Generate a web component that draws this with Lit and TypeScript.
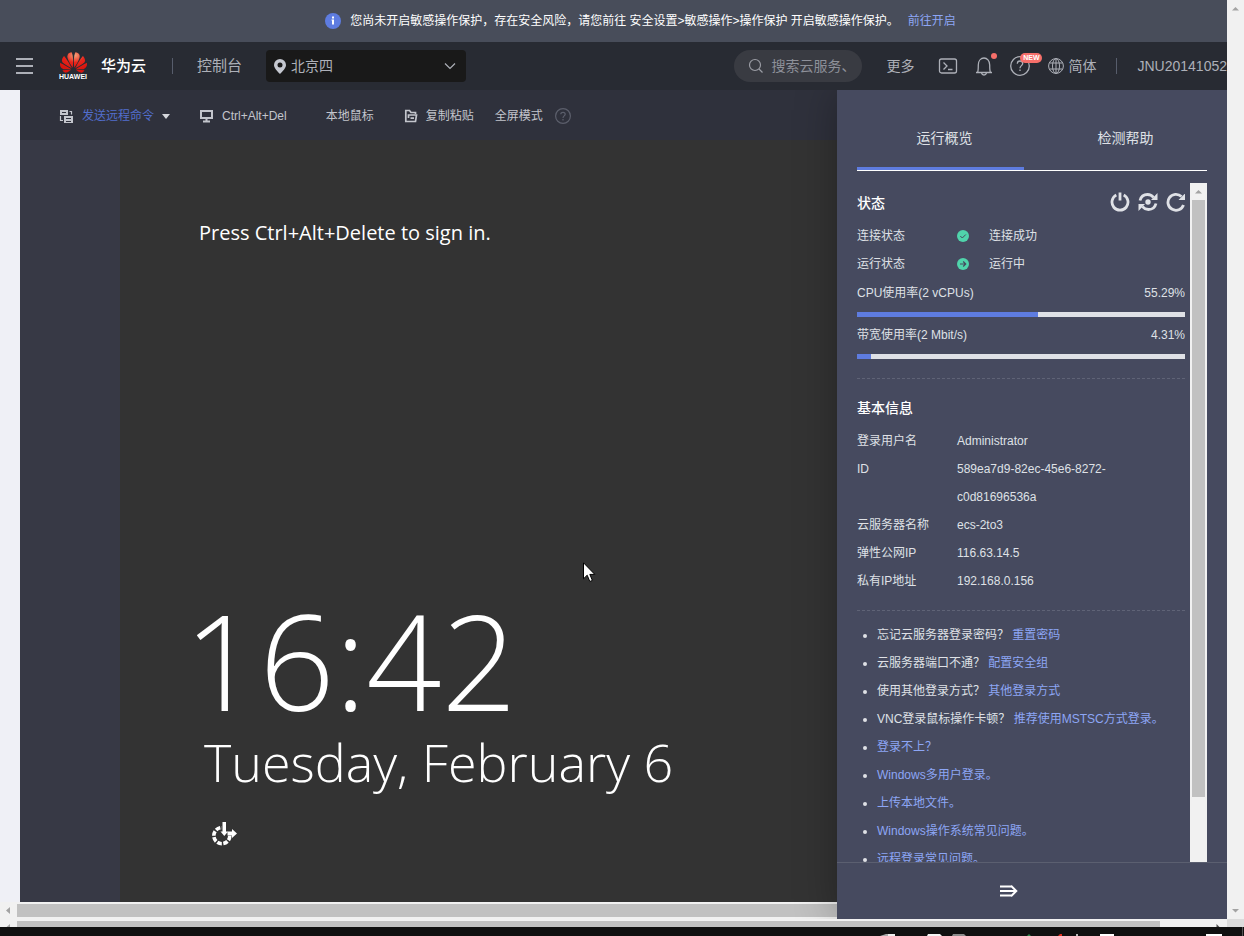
import { LitElement, html, css, svg } from "lit";
import { customElement, property, state } from "lit/decorators.js";
import { classMap } from "lit/directives/class-map.js";

const shared = css`
  * { box-sizing: border-box; }
  button, input, select { font: inherit; color: inherit; background: none; border: 0; padding: 0; margin: 0; outline: 0; }
  button { cursor: pointer; }
  a { color: inherit; text-decoration: none; }
  svg { display: block; flex: none; }
  h2, p, ul, dl, dd { margin: 0; padding: 0; }
`;

@customElement("scroll-track")
class ScrollTrack extends LitElement {
  @property({ type: Boolean, reflect: true }) horizontal = false;
  @property({ type: Number }) thumb = 0;
  @property({ type: Boolean }) end = false;

  static styles = [shared, css`
    :host { display: flex; flex-direction: column; width: 17px; background: #f1f1f1; overflow: hidden; flex: none; }
    :host([horizontal]) { flex-direction: row; width: auto; height: 17px; }
    .cap { flex: none; width: 17px; height: 17px; display: grid; place-items: center; }
    .lane { flex: 1; min-height: 0; min-width: 0; padding: 0 2px; }
    :host([horizontal]) .lane { padding: 2px 0; }
    .thumb { background: #c1c1c1; width: 100%; height: 100%; }
  `];

  render() {
    const size = this.horizontal ? `width:${this.thumb}%` : `height:${this.thumb}%`;
    const first = this.horizontal ? "M2 4.500 6 1v7z" : "M1 6.500h7L4.500 3z";
    const last = this.horizontal ? "M6 4.500 2.500 1v7z" : "M1 3h7L4.500 6.500z";
    return html`
      <span class="cap"><svg width="9" height="9" viewBox="0 0 9 9" fill="#a3a3a3"><path d=${first}/></svg></span>
      <div class="lane">${this.thumb ? html`<div class="thumb" style=${size}></div>` : ""}</div>
      ${this.end ? html`<span class="cap"><svg width="9" height="9" viewBox="0 0 9 9" fill=${this.horizontal ? "#505050" : "#a3a3a3"}><path d=${last}/></svg></span>` : ""}
    `;
  }
}

@customElement("notice-bar")
class NoticeBar extends LitElement {
  static styles = [shared, css`
    :host { display: flex; align-items: center; justify-content: center; height: 42px; padding-left: 54px; background: #484d5a; color: #fff; font-size: 12px; line-height: 20px; white-space: nowrap; }
    .bar { display: flex; align-items: center; gap: 9px; }
    a { color: #8da6f5; }
  `];
  render() {
    return html`<div class="bar">
      <svg width="16" height="16" viewBox="0 0 16 16"><circle cx="8" cy="8" r="8" fill="#5e7ce0"/><path d="M7 3.500h2v2H7zM6.500 6.500H9v5H7v-4h-.5z" fill="#fff"/></svg>
      <span>您尚未开启敏感操作保护&#xFF0C;存在安全风险&#xFF0C;请您前往 安全设置&gt;敏感操作&gt;操作保护 开启敏感操作保护。</span>
      <a href="#">前往开启</a>
    </div>`;
  }
}

@customElement("cloud-header")
class CloudHeader extends LitElement {
  static styles = [shared, css`
    :host { display: flex; align-items: center; height: 48px; padding-left: 16px; background: #282b33; color: #adb0b8; font-size: 14px; line-height: 20px; white-space: nowrap; overflow: hidden; }
    .brand { display: flex; align-items: center; gap: 14px; margin-left: 26px; color: #fff; font-size: 15px; font-weight: 500; }
    .mark { display: flex; flex-direction: column; align-items: center; width: 28px; }
    .word { font-size: 7px; line-height: 8px; font-weight: 700; }
    .rule { width: 1px; height: 16px; background: #575d6c; flex: none; }
    .brand + .rule { margin: 0 24px 0 26px; }
    .console { font-size: 15px; }
    .region { display: flex; align-items: center; position: relative; width: 200px; height: 32px; margin-left: 24px; background: #191919; border-radius: 4px; }
    .region select { appearance: none; width: 100%; height: 32px; padding-left: 25px; }
    .region svg { position: absolute; pointer-events: none; }
    .pin { left: 8px; }
    .chev { right: 10px; }
    .right { display: flex; align-items: center; margin-left: auto; }
    .search { display: flex; align-items: center; gap: 7px; width: 128px; height: 32px; padding: 0 12px 0 14px; margin-right: 24px; border-radius: 16px; background: #393b42; }
    .search input { width: 79px; min-width: 0; }
    .search input::placeholder { color: #8d9099; opacity: 1; }
    .tools { display: flex; align-items: center; gap: 16px; margin: 0 20px 0 24px; }
    .tools button { position: relative; width: 20px; height: 20px; }
    .dot { position: absolute; top: -3px; right: -3px; width: 6px; height: 6px; border-radius: 3px; background: #f66f6a; }
    .new { position: absolute; top: -3px; left: 10px; width: 22px; height: 10px; border-radius: 5px; background: #f66f6a; color: #fff; font-size: 7px; line-height: 10px; font-weight: 700; text-align: center; }
    .lang { display: flex; align-items: center; gap: 4px; margin-left: 2px; }
    .user { margin-left: 20px; }
  `];
  render() {
    return html`
      <button aria-label="菜单"><svg width="17" height="16" viewBox="0 0 17 16" stroke="#adb0b8" stroke-width="2"><path d="M0 1h17M0 8h17M0 15h17"/></svg></button>
      <a class="brand" href="#"><span class="mark">
        <svg width="27" height="21" viewBox="0 2.900 24 18.200"><defs><radialGradient id="petal" cx=".55" cy=".15" r=".7"><stop offset="0" stop-color="#f5a47c"/><stop offset=".5" stop-color="#e8261c"/><stop offset="1" stop-color="#d8150f"/></radialGradient></defs><path fill="url(#petal)" d="M3.670 6.140S1.820 7.910 1.720 9.780v.35c.08 1.510 1.220 2.400 1.220 2.400 1.830 1.790 6.260 4.040 7.300 4.550 0 0 .06.03.1-.01l.02-.04v-.04C7.520 10.800 3.670 6.140 3.670 6.140zM9.650 18.600c-.02-.08-.1-.08-.1-.08l-7.380.26c.8 1.430 2.150 2.530 3.560 2.200.96-.25 3.160-1.780 3.880-2.300.06-.05.04-.09.04-.09zm.08-.78C6.490 15.630.21 12.280.21 12.280c-.15.46-.2.9-.21 1.300v.07c0 1.070.4 1.820.4 1.820.8 1.690 2.340 2.200 2.340 2.200.7.3 1.400.31 1.400.31.12.02 4.400 0 5.540 0 .05 0 .08-.05.08-.05v-.06c0-.03-.03-.05-.03-.05zM9.060 3.190a3.420 3.420 0 00-2.570 3.150v.41c.03.6.16 1.050.16 1.050.66 2.900 3.860 7.650 4.550 8.650.05.05.1.03.1.03a.1.1 0 00.06-.1c1.060-10.600-1.110-13.420-1.110-13.420-.32.02-1.190.23-1.190.23zm8.299 2.270s-.49-1.800-2.440-2.280c0 0-.57-.14-1.170-.22 0 0-2.180 2.810-1.120 13.430.01.07.06.08.06.08.07.03.1-.03.1-.03.72-1.030 3.900-5.760 4.550-8.640 0 0 .36-1.400.02-2.340zm-2.920 13.070s-.07 0-.09.05c0 0-.01.07.03.1.7.51 2.850 2 3.880 2.300 0 0 .16.05.43.06h.14c.69-.02 1.900-.37 3-2.260l-7.400-.25zm7.830-8.410c.14-2.060-1.940-3.970-1.940-3.980 0 0-3.850 4.660-6.670 10.800 0 0-.03.08.02.13l.04.01h.06c1.060-.53 5.460-2.770 7.280-4.540 0 0 1.150-.93 1.210-2.420zm1.520 2.140s-6.280 3.370-9.520 5.550c0 0-.05.04-.03.11 0 0 .03.06.07.06 1.160 0 5.560 0 5.670-.02 0 0 .57-.02 1.270-.29 0 0 1.560-.5 2.370-2.270 0 0 .73-1.450.17-3.140z"/></svg>
        <span class="word">HUAWEI</span></span><span>华为云</span></a>
      <span class="rule"></span>
      <a class="console" href="#">控制台</a>
      <label class="region" aria-label="区域">
        <svg class="pin" width="12" height="15" viewBox="0 0 12 15"><path fill="#c5c8d0" fill-rule="evenodd" d="M6 0a6 6 0 0 1 6 6c0 3-3.500 6.500-6 9C3.500 12.500 0 9 0 6a6 6 0 0 1 6-6zm0 3.500a2.500 2.500 0 1 0 0 5 2.500 2.500 0 0 0 0-5z"/></svg>
        <select><option>北京四</option></select>
        <svg class="chev" width="12" height="8" viewBox="0 0 12 8" fill="none" stroke="#adb0b8" stroke-width="1.200"><path d="m1 1.500 5 5 5-5"/></svg>
      </label>
      <div class="right">
        <label class="search" aria-label="搜索">
          <svg width="16" height="16" viewBox="0 0 16 16" fill="none" stroke="#9a9ca4" stroke-width="1.200"><circle cx="7" cy="7" r="5.500"/><path d="m11 11 3.500 3.500"/></svg>
          <input placeholder="搜索云服务、">
        </label>
        <a href="#">更多</a>
        <div class="tools">
          <button aria-label="CloudShell"><svg width="20" height="20" viewBox="0 0 20 20" fill="none" stroke="#adb0b8" stroke-width="1.300"><rect x="1.500" y="3" width="17" height="14" rx="2"/><path d="m5.500 6.500 3.500 3.500-3.500 3.500M10 13.500h4.500"/></svg></button>
          <button aria-label="消息"><svg width="20" height="20" viewBox="0 0 20 20" fill="none" stroke="#adb0b8" stroke-width="1.300"><path d="M2 16.500h16M3.500 16.500c.8-1.500.8-3 .8-7.500C4.300 4.500 7 2 10 2s5.700 2.500 5.700 7c0 4.500 0 6 .8 7.500M7.500 17c.4 1.500 1.300 2 2.500 2s2.100-.5 2.500-2"/></svg><span class="dot"></span></button>
          <button aria-label="帮助"><svg width="20" height="20" viewBox="0 0 20 20" fill="none" stroke="#adb0b8" stroke-width="1.300"><circle cx="10" cy="10" r="9.300"/><path d="M7.300 7.800C7.300 6 8.500 5 10 5s2.700 1 2.700 2.500c0 2-2.700 2.300-2.700 4.700M10 13.500v1.600"/></svg><span class="new">NEW</span></button>
          <a class="lang" href="#"><svg width="16" height="16" viewBox="0 0 16 16" fill="none" stroke="#adb0b8"><circle cx="8" cy="8" r="7.400"/><ellipse cx="8" cy="8" rx="3.500" ry="7.400"/><path d="M8 .5v15M1.500 5h13M1.500 11h13"/></svg>简体</a>
        </div>
        <span class="rule"></span>
        <a class="user" href="#">JNU20141052</a>
      </div>
    `;
  }
}

@customElement("remote-console")
class RemoteConsole extends LitElement {
  static styles = [shared, css`
    :host { display: flex; flex-direction: column; flex: 1; min-width: 0; background: #eff0f6; }
    .body { flex: 1; min-height: 0; display: flex; flex-direction: column; margin-left: 20px; }
    .toolbar { display: flex; align-items: center; height: 50px; padding: 2px 0 0 39px; background: #2f313c; color: #c3c5cc; font-size: 12px; line-height: 20px; white-space: nowrap; flex: none; }
    .toolbar button { display: flex; align-items: center; gap: 8px; }
    .send { color: #526ecc; }
    .key { margin-left: 29px; }
    .mouse { margin-left: 39px; }
    .paste { margin: 0 21px 0 30px; }
    .help { margin-left: 12px; }
    .stage { flex: 1; min-height: 0; display: flex; padding-left: 100px; background: #373945; }
    .lock { position: relative; flex: 1; display: flex; flex-direction: column; padding: 78px 0 55px 64px; background: #333; color: #fff; font-family: "Open Sans", "Noto Sans", sans-serif; white-space: nowrap; overflow: hidden; }
    .hint { font-size: 20px; line-height: 30px; margin-left: 15px; }
    .clock { margin-top: auto; font-size: 132px; line-height: 140px; font-weight: 300; }
    .date { font-size: 52px; line-height: 64px; font-weight: 300; margin: 0 0 27px 20px; }
    .ease { align-self: flex-start; margin-left: 28px; }
    .pointer { position: absolute; left: 463px; top: 422px; }
  `];
  render() {
    return html`
      <div class="body">
        <div class="toolbar" role="toolbar">
          <button class="send"><svg width="15" height="15" viewBox="0 0 15 15"><path fill="#c3c5cc" d="M1 1h8v5H1zM3 3v1h4V3zM5 7h9v7H5zM7 9v1h5V9zM7 12v1h5v-1z" fill-rule="evenodd"/><path d="M10.500 2.500h2v3M1.500 7v4.500H4" fill="none" stroke="#c3c5cc" stroke-width="1.200"/></svg>发送远程命令<svg width="8" height="5" viewBox="0 0 8 5"><path d="M0 0h8L4 5z" fill="#d5d7dc"/></svg></button>
          <button class="key"><svg width="15" height="14" viewBox="0 0 15 14"><path fill="none" stroke="#c3c5cc" stroke-width="2" d="M2 2h11v7H2zM7.500 9v4M4 12.500h7"/></svg>Ctrl+Alt+Del</button>
          <button class="mouse">本地鼠标</button>
          <button class="paste"><svg width="14" height="14" viewBox="0 0 14 14" fill="none" stroke="#c3c5cc" stroke-width="1.700"><path d="M11.500 5V3.500H7L5.500 1.500H1.800v11h9.700L12.500 6H4.500L4.500 9M6.500 9.200h3.500"/></svg>复制粘贴</button>
          <button>全屏模式</button>
          <button class="help" aria-label="帮助"><svg width="16" height="16" viewBox="0 0 16 16" fill="none" stroke="#5c5f6c" stroke-width="1.200"><circle cx="8" cy="8" r="7.400"/><path d="M5.800 6.300C5.800 5 6.800 4.300 8 4.300s2.200.8 2.200 1.900C10.200 7.800 8 8 8 9.900M8 11v1.400"/></svg></button>
        </div>
        <div class="stage"><div class="lock">
          <p class="hint">Press Ctrl+Alt+Delete to sign in.</p>
          <p class="clock">16:42</p>
          <p class="date">Tuesday, February 6</p>
          <button class="ease" aria-label="Ease of access"><svg width="26" height="26" viewBox="0 0 26 26"><circle cx="9.800" cy="14.700" r="8" fill="none" stroke="#fff" stroke-width="3.600" stroke-dasharray="4.700 1.550" pathLength="50"/><path d="M10 0h15v14H15l-2.500 3L10 14z" fill="#333"/><path d="M10.500 1h3.500v9.500h2L12.300 15l-3.800-4.500h2zM15.500 10.500H20V8l5 4.500-5 4.500v-2.500h-4.500z" fill="#fff"/></svg></button>
          <svg class="pointer" width="13" height="21" viewBox="0 0 13 21"><path d="M.5.8v16l3.700-3.600 2.600 6.300 2.600-1.100-2.600-6h5z" fill="#fff" stroke="#000"/></svg>
        </div></div>
      </div>
      <scroll-track horizontal .thumb=${100}></scroll-track>
    `;
  }
}

const basics: [string, string][] = [
  ["登录用户名", "Administrator"],
  ["ID", "589ea7d9-82ec-45e6-8272-c0d81696536a"],
  ["云服务器名称", "ecs-2to3"],
  ["弹性公网IP", "116.63.14.5"],
  ["私有IP地址", "192.168.0.156"],
];
const usage = [
  { id: "cpu", label: "CPU使用率(2 vCPUs)", value: 55.29 },
  { id: "net", label: "带宽使用率(2 Mbit/s)", value: 4.31 },
];
const faqs: [string, string][] = [
  ["忘记云服务器登录密码\uFF1F", "重置密码"],
  ["云服务器端口不通\uFF1F", "配置安全组"],
  ["使用其他登录方式\uFF1F", "其他登录方式"],
  ["VNC登录鼠标操作卡顿\uFF1F", "推荐使用MSTSC方式登录。"],
  ["", "登录不上\uFF1F"],
  ["", "Windows多用户登录。"],
  ["", "上传本地文件。"],
  ["", "Windows操作系统常见问题。"],
  ["", "远程登录常见问题。"],
];

@customElement("overview-panel")
class OverviewPanel extends LitElement {
  @state() private tab = 0;

  static styles = [shared, css`
    :host { display: flex; flex-direction: column; flex: none; width: 390px; background: #464a5f; color: #dfe1e6; font-size: 12px; line-height: 28px; box-shadow: 0 0 40px rgba(0, 0, 0, .3); z-index: 1; }
    .tabs { display: grid; grid-template-columns: 1fr 1fr; margin: 0 20px 12px; border-bottom: 1px solid #fff; flex: none; }
    .tab { height: 80px; padding-top: 16px; font-size: 14px; background: linear-gradient(#5e7ce0, #5e7ce0) no-repeat 0 100% / 0 3px; }
    .tab + .tab { padding-left: 12px; }
    .on { background-size: 167px 3px; }
    .view { flex: 1; min-height: 0; display: flex; gap: 5px; margin: 0 20px; }
    .content { flex: 1; min-width: 0; overflow: hidden; padding-top: 6px; }
    .head { display: flex; align-items: center; justify-content: space-between; margin-bottom: 5px; }
    h2 { font-size: 14px; line-height: 28px; font-weight: 500; color: #fff; }
    .acts { display: flex; gap: 8px; margin-right: -1px; padding-bottom: 2px; }
    .row { display: flex; align-items: center; }
    .row dt { width: 100px; flex: none; }
    .row dd { display: flex; align-items: center; gap: 20px; }
    .usage { display: grid; gap: 4px; margin: 1px 0 19px; }
    .line { display: flex; justify-content: space-between; margin-bottom: 5px; }
    .bar { height: 5px; background: #dfe1e6; }
    .fill { height: 5px; background: #5e7ce0; }
    .section { border-top: 1px dashed #5f6376; padding: 15px 0; }
    .section .row { align-items: flex-start; }
    .section dd { max-width: 160px; }
    .faq { border-top: 1px dashed #5f6376; padding: 10px 0 0 20px; }
    .faq a { color: #8da6f5; }
    .foot { display: grid; place-items: center; height: 57px; border-top: 1px solid #5b5f70; padding-right: 46px; flex: none; }
  `];

  render() {
    return html`
      <div class="tabs" role="tablist">
        ${["运行概览", "检测帮助"].map((name, i) => html`<button role="tab" class=${classMap({ tab: true, on: this.tab === i })} @click=${() => (this.tab = i)}>${name}</button>`)}
      </div>
      <div class="view">
        <div class="content">
          <div class="head"><h2>状态</h2><div class="acts">
            <button aria-label="关机"><svg width="20" height="20" viewBox="0 0 20 20" fill="none" stroke="#dfe1e6" stroke-width="2.800"><path d="M6.300 3.100a8 8 0 1 0 7.400 0M10 .5v8"/></svg></button>
            <button aria-label="重启"><svg width="20" height="20" viewBox="0 0 20 20" fill="none" stroke="#dfe1e6" stroke-width="2.800"><path d="M2 8.500C3 4.500 6 2.500 9.500 2.500c2.500 0 4.500 1 6 3M18 11.500c-1 4-4 6-7.500 6-2.500 0-4.500-1-6-3"/><path d="M19.500 1v7H13zM.5 19v-7H7z" fill="#dfe1e6" stroke="none"/><circle cx="10" cy="10" r="2.700" fill="#dfe1e6" stroke="none"/></svg></button>
            <button aria-label="刷新"><svg width="20" height="20" viewBox="0 0 20 20" fill="none" stroke="#dfe1e6" stroke-width="2.800"><path d="M15.500 4.500A8 8 0 1 0 17.500 13"/><path d="M19.500 1v7H12.500z" fill="#dfe1e6" stroke="none"/></svg></button>
          </div></div>
          <dl>
            <div class="row"><dt>连接状态</dt><dd><svg width="12" height="12" viewBox="0 0 12 12"><circle cx="6" cy="6" r="6" fill="#50d4ab"/><path d="m3.300 6 2 2 3.500-3.500" fill="none" stroke="#464a5f"/></svg>连接成功</dd></div>
            <div class="row"><dt>运行状态</dt><dd><svg width="12" height="12" viewBox="0 0 12 12"><circle cx="6" cy="6" r="6" fill="#50d4ab"/><path d="M3 6h5.500M6.200 3.500 8.700 6 6.200 8.500" fill="none" stroke="#464a5f" stroke-width="1.200"/></svg>运行中</dd></div>
          </dl>
          <div class="usage">${usage.map((u) => html`<div>
            <div class="line"><span id=${u.id}>${u.label}</span><span>${u.value}%</span></div>
            <div class="bar" role="progressbar" aria-labelledby=${u.id} aria-valuenow=${u.value}><div class="fill" style=${`width:${u.value}%`}></div></div>
          </div>`)}</div>
          <div class="section">
            <div class="head"><h2>基本信息</h2></div>
            <dl>${basics.map(([k, v]) => html`<div class="row"><dt>${k}</dt><dd>${v}</dd></div>`)}</dl>
          </div>
          <ul class="faq">${faqs.map(([q, a]) => html`<li>${q ? html`${q} ` : ""}<a href="#">${a}</a></li>`)}</ul>
        </div>
        <scroll-track .thumb=${90.2}></scroll-track>
      </div>
      <button class="foot" aria-label="收起"><svg width="18" height="12" viewBox="0 0 18 12" fill="none" stroke="#fff" stroke-width="2"><path d="M0 1.500h12M0 6h16M0 10.500h12M11 .7 16.300 6 11 11.300"/></svg></button>
    `;
  }
}

@customElement("app-root")
class AppRoot extends LitElement {
  static styles = [shared, css`
    :host { display: flex; flex-direction: column; height: 100vh; overflow: hidden; background: #101010; font-family: "Liberation Sans", "Noto Sans CJK SC", sans-serif; }
    .window { flex: 1; min-height: 0; display: flex; }
    .page { flex: 1; min-width: 0; display: flex; flex-direction: column; }
    .work { flex: 1; min-height: 0; display: flex; overflow: hidden; }
    .hscroll { display: flex; height: 8px; overflow: hidden; flex: none; background: #f1f1f1; }
    .hscroll scroll-track { flex: 1; }
    .corner { width: 17px; background: #dcdcdc; }
    .taskbar { display: flex; align-items: flex-end; justify-content: flex-end; height: 9px; flex: none; }
  `];
  render() {
    return html`
      <div class="window">
        <div class="page">
          <notice-bar></notice-bar>
          <cloud-header></cloud-header>
          <div class="work"><remote-console></remote-console><overview-panel></overview-panel></div>
        </div>
        <scroll-track end></scroll-track>
      </div>
      <div class="hscroll"><scroll-track horizontal end .thumb=${95.8}></scroll-track><span class="corner"></span></div>
      <div class="taskbar"><svg width="364" height="9" viewBox="0 0 364 9">${svg`
        <path d="M0 9l6-2h9v2z" fill="#aaa"/><path d="M8 7h7v2H8z" fill="#eee"/>
        <path d="M48 7h12l2 2H47z" fill="#f4f4f4"/><path d="M73 7h11l2 2H72z" fill="#8c8c8c"/>
        <path d="M147 9l2-2 2 2z" fill="#2f8a4c"/><path d="M178 9l2-2h2v2z" fill="#e0301e"/>
        <path d="M196 7h2v2h-2z" fill="#bbb"/><path d="M220 7h14v2h-14zM326 7h16v2h-16z" fill="#fff"/>
        <path d="M362 0h1v9h-1z" fill="#555"/>`}</svg></div>
    `;
  }
}
